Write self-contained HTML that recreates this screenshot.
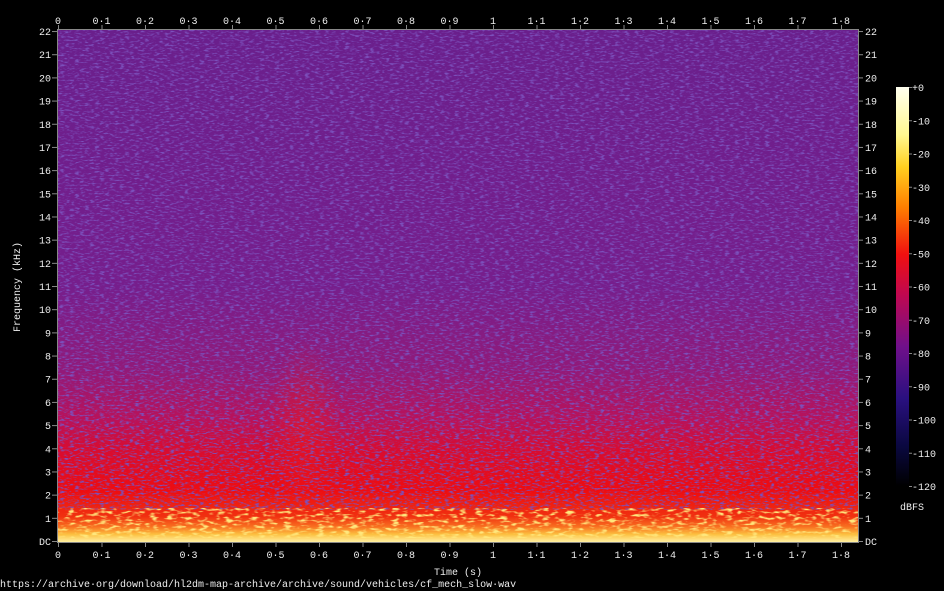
<!DOCTYPE html>
<html><head><meta charset="utf-8"><style>
html,body{margin:0;padding:0;background:#000;width:944px;height:591px;overflow:hidden}
svg{display:block}
text{font-family:"Liberation Mono","DejaVu Sans Mono",monospace;font-size:10px;fill:#eee}
</style></head><body>
<svg id="s" width="944" height="591" xmlns="http://www.w3.org/2000/svg">
<defs>
<linearGradient id="g" x1="0" y1="0" x2="0" y2="1">
<stop offset="0" stop-color="#6a1f8c"/>
<stop offset="0.5" stop-color="#761e8c"/>
<stop offset="0.66" stop-color="#901a7a"/>
<stop offset="0.76" stop-color="#b8125a"/>
<stop offset="0.82" stop-color="#d80c30"/>
<stop offset="0.9" stop-color="#ee0c10"/>
<stop offset="0.95" stop-color="#f03010"/>
<stop offset="0.97" stop-color="#f87020"/>
<stop offset="0.985" stop-color="#fcc040"/>
<stop offset="1" stop-color="#fff0a0"/>
</linearGradient>
<radialGradient id="h" cx="0.5" cy="0.5" r="0.5">
<stop offset="0" stop-color="#f01818" stop-opacity="0.5"/>
<stop offset="1" stop-color="#f01818" stop-opacity="0"/>
</radialGradient>
<linearGradient id="cb" x1="0" y1="0" x2="0" y2="1">
<stop offset="0" stop-color="#fffff0"/>
<stop offset="0.12" stop-color="#fff890"/>
<stop offset="0.2" stop-color="#ffd020"/>
<stop offset="0.3" stop-color="#ff8000"/>
<stop offset="0.42" stop-color="#f01010"/>
<stop offset="0.52" stop-color="#c00850"/>
<stop offset="0.65" stop-color="#70108a"/>
<stop offset="0.78" stop-color="#2a1080"/>
<stop offset="0.9" stop-color="#0a0840"/>
<stop offset="1" stop-color="#000"/>
</linearGradient>
<filter id="n" x="0" y="0" width="1" height="1">
<feTurbulence type="fractalNoise" baseFrequency="0.2 0.6" numOctaves="2" seed="3"/>
<feColorMatrix values="0 0 0 0 0.2  0 0 0 0 0.08  0 0 0 0 0.5  0 0 0 4 -2.0"/>
</filter>
<filter id="n2" x="0" y="0" width="1" height="1">
<feTurbulence type="fractalNoise" baseFrequency="0.12 0.35" numOctaves="2" seed="7"/>
<feColorMatrix values="0 0 0 0 1  0 0 0 0 0.8  0 0 0 0 0.2  0 0 0 4 -2.0"/>
</filter>
</defs>
<rect x="58" y="30" width="800" height="512" fill="url(#g)"/>
<ellipse cx="305" cy="430" rx="38" ry="90" fill="url(#h)"/>
<rect x="58" y="30" width="800" height="480" filter="url(#n)"/>
<rect x="58" y="508" width="800" height="30" filter="url(#n2)"/>
<rect x="57.5" y="29.5" width="801" height="513" fill="none" stroke="#888" stroke-width="1"/>
<rect x="896" y="87" width="13" height="399" fill="url(#cb)"/>
<g id="t"></g>
<text x="458" y="575" text-anchor="middle">Time (s)</text>
<text transform="translate(20,287) rotate(-90)" text-anchor="middle">Frequency (kHz)</text>
<text x="900" y="510">dBFS</text>
<text x="0" y="587">https://archive·org/download/hl2dm-map-archive/archive/sound/vehicles/cf_mech_slow·wav</text>
</svg>
<script>
var g=document.getElementById('t'),NS='http://www.w3.org/2000/svg';
function T(x,y,s,a){var e=document.createElementNS(NS,'text');e.setAttribute('x',x);e.setAttribute('y',y);if(a)e.setAttribute('text-anchor',a);e.textContent=s;g.appendChild(e);}
function L(x1,y1,x2,y2){var e=document.createElementNS(NS,'line');e.setAttribute('x1',x1);e.setAttribute('y1',y1);e.setAttribute('x2',x2);e.setAttribute('y2',y2);e.setAttribute('stroke','#888');g.appendChild(e);}
for(var i=0;i<=18;i++){var x=58+i*43.5;var s=i==0?'0':i==10?'1':(i<10?'0·'+i:'1·'+(i-10));
T(x,24,s,'middle');T(x,558,s,'middle');L(x+.5,25,x+.5,29);L(x+.5,543,x+.5,547);}
for(var k=0;k<=22;k++){var y=541-k*23.18;var s=k==0?'DC':''+k;
T(51,y+4,s,'end');T(865,y+4,s);L(52,y+.5,57,y+.5);L(859,y+.5,863,y+.5);}
for(var d=0;d<=12;d++){var y=87+d*33.25;T(912,y+4,d==0?'+0':'-'+d*10);L(909,y+.5,912,y+.5);}
</script>
</body></html>
